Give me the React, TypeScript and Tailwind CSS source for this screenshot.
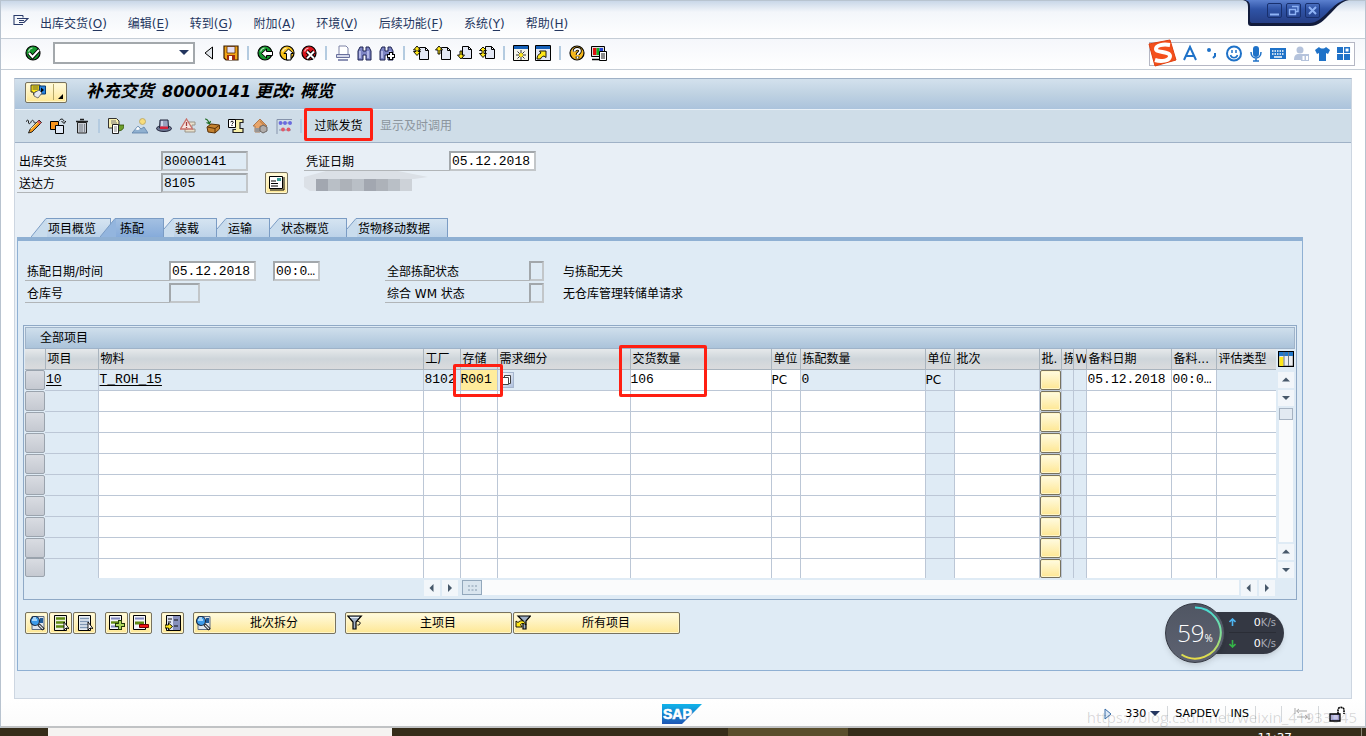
import type { ReactNode } from "react";
import clsx from "clsx";

const MENUS = [
  ["出库交货", "O"],
  ["编辑", "E"],
  ["转到", "G"],
  ["附加", "A"],
  ["环境", "V"],
  ["后续功能", "F"],
  ["系统", "Y"],
  ["帮助", "H"],
];

const ball = (c: string) => (
  <>
    <circle cx="8" cy="8" r="7" fill={c} stroke="#000" strokeWidth="1.2" />
    <path d="M3.500 6.500a5 5 0 0 1 4-3.500" stroke="#fff" strokeWidth="1.200" fill="none" opacity=".7" />
  </>
);
const sheet = (
  <path d="M6.500 2.500h6l3 3v9h-9z M12.500 2.500v3h3" fill="#e3e8f5" stroke="#000" />
);
const binoculars = (
  <>
    <path d="M1 15V6l2-4h3v4h3V2h3l2 4v9h-5v-5H6v5z" fill="#7d84c4" stroke="#1c2350" />
    <path d="M3 6v7M11 6v7" stroke="#c9cdf2" strokeWidth="1.400" />
  </>
);
const magnifier = (
  <>
    <path d="M3 1.500h12v13H3z" fill="#dfe5ec" stroke="#5c6b80" />
    <path d="M11 3h3v5h-3z" fill="#1f5b9a" />
    <circle cx="6" cy="6" r="4.500" fill="#3c9bea" stroke="#1b2c45" strokeWidth="1.200" />
    <path d="M3 5h5M4 3h3" stroke="#c9e9ff" strokeWidth="1.300" />
    <path d="M9.500 9.500l5 5" stroke="#000" strokeWidth="3" />
    <path d="M10 10l4 4" stroke="#d8e0ea" strokeWidth="1.400" />
  </>
);
const pointer = <path d="M11 7v8l2-2 3 .5z" fill="#fff" stroke="#000" strokeWidth=".9" />;

const ICONS: Record<string, ReactNode> = {
  exit: (
    <path d="M10 2.500H1v9h9M10 2.500v2M4 5.500h7.500l3.500 0-4 4H6M6 7.500h5" fill="none" stroke="#2b3c6b" strokeWidth="1.100" />
  ),
  check: (
    <>
      {ball("#159a2e")}
      <path d="M4 8l3.500 4L14 5" fill="none" stroke="#000" strokeWidth="4" />
      <path d="M4 8l3.500 4L14 5" fill="none" stroke="#fff" strokeWidth="2" />
    </>
  ),
  first: <path d="M11.500 2v12L4 8z" fill="#e3e7ec" stroke="#000" />,
  save: (
    <>
      <path d="M1 1h14v14H3l-2-2z" fill="#f2a618" stroke="#3a1c00" strokeWidth="1.200" />
      <path d="M4 1.500h8V8H4z" fill="#e6dff2" stroke="#5b2b00" strokeWidth=".8" />
      <path d="M4 10h8v5H4z" fill="#a02a10" />
      <path d="M6 11h3v4H6z" fill="#fff" />
    </>
  ),
  back: (
    <>
      {ball("#159a2e")}
      <path d="M4.500 8.500l5-4.500V6.500h6v4h-6V13z" fill="#fff" stroke="#000" />
    </>
  ),
  up: (
    <>
      {ball("#f7c21b")}
      <path d="M9.500 4L5 8.500h2.500V15h4.500V8.500h2.500z" fill="#fff" stroke="#000" />
    </>
  ),
  cancel: (
    <>
      {ball("#d9141c")}
      <path d="M6 6.500l7 7M13 6.500l-7 7" stroke="#000" strokeWidth="4" />
      <path d="M6 6.500l7 7M13 6.500l-7 7" stroke="#fff" strokeWidth="2" />
    </>
  ),
  print: (
    <>
      <path d="M4 9V1h7l2 2v6" fill="#fff" stroke="#7c82a6" />
      <path d="M1.500 9.500h13v3h-13z" fill="#d5d8ea" stroke="#686f9c" />
      <path d="M3 15h10" stroke="#686f9c" strokeWidth="1.500" />
    </>
  ),
  find: binoculars,
  findNext: (
    <>
      {binoculars}
      <path d="M12 7v8M8 11h8" stroke="#000" strokeWidth="4" />
      <path d="M12 8v6M9 11h6" stroke="#fff" strokeWidth="2" />
    </>
  ),
  firstPage: (
    <>
      {sheet}
      <path d="M4 1L.500 5H3v1.500H.500L4 10.500l3.500-4H5V5h2.500z" fill="#ffe81a" stroke="#000" strokeWidth=".9" />
    </>
  ),
  prevPage: (
    <>
      {sheet}
      <path d="M4 1L.500 5H3v4h2V5h2.500z" fill="#ffe81a" stroke="#000" strokeWidth=".9" />
    </>
  ),
  nextPage: (
    <>
      <g transform="translate(-1 -1)">{sheet}</g>
      <path d="M4 14L.500 10H3V6h2v4h2.500z" fill="#ffe81a" stroke="#000" strokeWidth=".9" />
    </>
  ),
  lastPage: (
    <>
      <g transform="translate(0 -1)">{sheet}</g>
      <path d="M4 2l3.500 3.500H5v3h2.500L4 12.500.500 8.500H3v-3H.500z" fill="#ffe81a" stroke="#000" strokeWidth=".9" />
    </>
  ),
  session: (
    <>
      <path d="M.5.5h15v15H.5z" fill="#f4f4ea" stroke="#000" />
      <path d="M1 1h14v3H1z" fill="#1560b8" />
      <path d="M8 5v10M3 10h10M4.500 6.500l7 7M11.500 6.500l-7 7" stroke="#333" />
      <circle cx="8" cy="10" r="2" fill="#ffe81a" />
    </>
  ),
  shortcut: (
    <>
      <path d="M.5.5h15v15H.5z" fill="#e3e8f5" stroke="#000" />
      <path d="M1 1h14v3H1z" fill="#1560b8" />
      <path d="M2 14c0-3 1.500-5 4-6L4.500 6H11v6.500L9 11c-2 .500-3 1.500-3.500 3z" fill="#ffe81a" stroke="#000" strokeWidth=".9" />
    </>
  ),
  help: (
    <>
      {ball("#f5b81c")}
      <path d="M5.500 6.500C5.500 3 11 3 11 6c0 2-2.500 2-2.500 4M8.500 11.500v2" stroke="#000" strokeWidth="3.600" fill="none" />
      <path d="M5.500 6.500C5.500 3 11 3 11 6c0 2-2.500 2-2.500 4M8.500 11.500v2" stroke="#fff" strokeWidth="1.800" fill="none" />
    </>
  ),
  monitor: (
    <>
      <path d="M.5 1.500h13v10H.5z" fill="#ddd" stroke="#000" />
      <path d="M2 3h3.500v7H2z" fill="#e01010" />
      <path d="M5.500 3h3v7h-3z" fill="#10b020" />
      <path d="M8.500 3H12v7H8.500z" fill="#2040d0" />
      <path d="M1 14.500h8" stroke="#000" strokeWidth="1.500" />
      <path d="M8.500 6.500h7v9h-7z" fill="#fff" stroke="#000" />
      <path d="M10 9h4M10 11h4M10 13h4" stroke="#000" strokeWidth=".9" />
    </>
  ),
  command: (
    <>
      <path d="M1 1h9v7H5l-1 3-1-3H1z" fill="#ffe81a" stroke="#222" strokeWidth=".9" />
      <path d="M2.500 3h6M2.500 5h6" stroke="#333" strokeWidth=".8" />
      <path d="M9.500 2h6v8h-6z" fill="#2b86e0" stroke="#0b3a70" />
      <path d="M11 3.500v5L14 6z" fill="#000" />
      <path d="M4 9l5-3 3 3-4 5-4-2z" fill="#e6e9f2" stroke="#555" strokeWidth=".8" />
    </>
  ),
  edit: (
    <>
      <path d="M0 4c1-3 3-2 2.500 0s1.500 2.500 2.500 0S7.500 2 8 4s2 1 2.500 0" fill="none" stroke="#222" />
      <path d="M13 2l2.500 2.500L6 14l-3.500 1L4 11.500z" fill="#f59b1c" stroke="#222" />
      <path d="M12 3l2.500 2.500" stroke="#d9546a" strokeWidth="2" />
      <path d="M5 11l6.500-6.500" stroke="#ffe28a" />
    </>
  ),
  other: (
    <>
      <path d="M.5 3.500h8v8h-8z" fill="#f7941d" stroke="#000" />
      <path d="M5.500 7.500h8v8h-8z" fill="#dfe8f5" stroke="#000" />
      <path d="M9.500 2.500c1-2 4-2 4.500 1M11.500 3l2.500 2.500L16 3" fill="none" stroke="#000" />
    </>
  ),
  trash: (
    <>
      <path d="M3.500 4.500h9V15h-9z" fill="#c8ccd2" stroke="#222" />
      <path d="M2 3.500h12M6 1.500h4" stroke="#222" strokeWidth="1.600" />
      <path d="M6 6v8M8 6v8M10.500 6v8" stroke="#7b828d" />
    </>
  ),
  doc: (
    <>
      <path d="M.5.5h8l2.500 2.500v7H.5z" fill="#f7efb0" stroke="#333" />
      <path d="M3 3h5M3 5h6" stroke="#777" />
      <path d="M9 7h7c0 4-2 6-7 6z" fill="#6c9e2a" stroke="#2e4d08" strokeWidth=".8" />
      <path d="M4.500 6.500h6v9h-6z" fill="#fff" stroke="#222" />
      <path d="M6 9h3M6 11h3M6 13h3" stroke="#888" />
    </>
  ),
  scenery: (
    <>
      <circle cx="10.500" cy="3.500" r="3" fill="#f7dc7a" stroke="#b8a260" strokeWidth=".8" />
      <path d="M0 15l6-7 3 3 3-2 4 6z" fill="#8fb0d0" stroke="#5e82a8" strokeWidth=".8" />
      <path d="M3.500 11.500L6 8.500l2 2.500-2 1z" fill="#fff" />
    </>
  ),
  hat: (
    <>
      <ellipse cx="8" cy="10.500" rx="7.500" ry="3" fill="#6b7390" stroke="#20243a" />
      <path d="M4 2h8l.5 8h-9z" fill="#9aa2c0" stroke="#20243a" />
      <path d="M6 3v5" stroke="#e2e6f4" strokeWidth="1.500" />
      <path d="M4 8.500h8v2.500H4z" fill="#d6213a" />
    </>
  ),
  warn: (
    <>
      <path d="M8 4h7v3h-3v4h3v3H5v-3h3z" fill="#e8e0cc" stroke="#9a9488" />
      <path d="M6.500 1l6 10h-12z" fill="#f6e6e2" stroke="#c9706a" strokeWidth="1.300" />
      <path d="M6.500 4v4M6.500 9v1" stroke="#a03a3a" strokeWidth="1.300" />
    </>
  ),
  pack: (
    <>
      <path d="M3 9l4-3 8.500 1v4L11 15l-7-1z" fill="#c4812e" stroke="#5a3208" />
      <path d="M3.500 9l7.500 1.500L15 7.500M11 10.500V15" stroke="#5a3208" fill="none" />
      <path d="M1 1c2 0 3 1 4 4M2.500 4.500L5.500 6 6.500 3" stroke="#1d6b22" strokeWidth="1.200" fill="none" />
    </>
  ),
  script: (
    <>
      <path d="M6 1.500h9v3h-3v6h3v4H5v-3h3" fill="#f6efa8" stroke="#222" strokeWidth="1.200" />
      <path d="M.5 1.500h7v8h-7z" fill="#fff" stroke="#000" />
      <path d="M2.800 4.300c0-1.500 2.500-1.500 2.500 0 0 1-1.300 1-1.300 2M4 7v1" stroke="#000" fill="none" />
    </>
  ),
  house: (
    <>
      <path d="M8 1L1 8h2v6h5V8h7z" fill="#e8a56a" stroke="#b07a4e" />
      <path d="M8 3l6 6" stroke="#c98648" strokeWidth="1.500" />
      <path d="M3 10h5v4H3z" fill="#9a9694" />
      <path d="M8 9l3-2 4 2v4l-4 2-3-2z" fill="#b0acaa" stroke="#6b6664" />
    </>
  ),
  beads: (
    <>
      <path d="M1 16V1.500h15M3 5h13M3 12h12" fill="none" stroke="#8593ab" />
      <g fill="#6a6ae0">
        <circle cx="4.500" cy="5" r="1.900" />
        <circle cx="9" cy="5" r="1.900" />
        <circle cx="14" cy="5" r="1.900" />
      </g>
      <g fill="#e05a6a">
        <circle cx="7" cy="11.500" r="1.900" />
        <circle cx="12.500" cy="11.500" r="1.900" />
      </g>
    </>
  ),
  address: (
    <>
      <path d="M.5 1.500h13v12H.5z" fill="#fff" stroke="#000" />
      <path d="M15 2v13H1" stroke="#000" fill="none" />
      <path d="M8 3h4v3H8z" fill="#3a9a94" />
      <path d="M2 6h5M2 8.500h7M2 11h7" stroke="#000" />
    </>
  ),
  detail: magnifier,
  selectAll: (
    <>
      <path d="M1.500.5h12v15h-12z" fill="#eef0e2" stroke="#000" />
      <path d="M3 3.500h9M3 7.500h9M3 11.500h9" stroke="#5f8a12" strokeWidth="2.600" />
      {pointer}
    </>
  ),
  deselect: (
    <>
      <path d="M1.500.5h12v15h-12z" fill="#e9eff5" stroke="#000" />
      <path d="M3 3.500h9M3 6.500h9M3 9.500h9M3 12.500h9" stroke="#8098b4" strokeWidth="1.500" />
      {pointer}
    </>
  ),
  addRow: (
    <>
      <path d="M.5.5h12v14H.5z" fill="#f3f5fa" stroke="#000" />
      <path d="M2 3.500h9M2 11.500h9" stroke="#8088bc" strokeWidth="2" />
      <path d="M2 7.500h9" stroke="#5f8a12" strokeWidth="2.400" />
      <path d="M11 5v10M6 10h10" stroke="#1e3408" strokeWidth="4" />
      <path d="M11 6v8M7 10h8" stroke="#a9d45a" strokeWidth="2.200" />
    </>
  ),
  removeRow: (
    <>
      <path d="M.5.5h12v14H.5z" fill="#f3f5fa" stroke="#000" />
      <path d="M2 3.500h9" stroke="#8088bc" strokeWidth="2" />
      <path d="M2 8h9" stroke="#5f8a12" strokeWidth="3" />
      <path d="M6.500 9.500h9v3h-9z" fill="#f01414" stroke="#700" />
    </>
  ),
  position: (
    <>
      <path d="M1.500.5h14v15h-14z" fill="#dfe3f2" stroke="#000" />
      <path d="M8 1h7v14H8z" fill="#8790bd" />
      <path d="M3 4h4M9 5h4M3 7h3M9 11h4" stroke="#111" />
      <path d="M0 10h3.500V8L7.500 11.500l-4 3.500v-2H0z" fill="#ffe81a" stroke="#000" strokeWidth=".9" />
    </>
  ),
  filter: (
    <>
      <path d="M.8 1h13.500L9 7v7H6V7z" fill="#9fb0c6" stroke="#000" strokeWidth="1.200" />
      <path d="M3 2.500h9" stroke="#e6edf5" />
      <path d="M10.500 6.500c3.500-.500 3.500 4 0 3.500" stroke="#000" fill="none" />
    </>
  ),
  unfilter: (
    <>
      <path d="M3 1h12.500L11 6v8H8V6z" fill="#9fb0c6" stroke="#000" strokeWidth="1.200" />
      <path d="M1 12V6l2 1.500c3-3 7-2 8 2.500-2-2-4-2-5.500-.500L7 12z" fill="#ffe81a" stroke="#000" strokeWidth=".9" />
    </>
  ),
  columns: (
    <>
      <path d="M.5.5h15v15H.5z" fill="#eceef0" stroke="#000" strokeWidth="1.400" />
      <path d="M1 1h14v4H1z" fill="#2378c8" />
      <path d="M1.500 6h4v9h-4z" fill="#ffe81a" />
      <path d="M6 1v14M10.500 1v14" stroke="#6d7884" />
    </>
  ),
  swap: <path d="M1 2v6M3 5h10M5 3L2.500 5 5 7M15 8v6M3 11h10M11 9l2.500 2-2.500 2" fill="none" stroke="#a9a9a9" />,
  lock: (
    <>
      <path d="M9 8V4c0-3.500 6-3.500 6 0v4" fill="none" stroke="#000" strokeWidth="1.600" strokeDasharray="2 .6" />
      <path d="M1 8h10v7H1z" fill="#a7a6d8" stroke="#000" strokeWidth="1.300" />
      <path d="M3 10h6M3 12h6" stroke="#e5e5fa" />
    </>
  ),
};

function Icon({ name }: { name: string }) {
  return (
    <svg width="16" height="16" viewBox="0 0 16 16" className="shrink-0" aria-hidden="true">
      {ICONS[name]}
    </svg>
  );
}

function IconButton({ name }: { name: string }) {
  return (
    <button aria-label={name} className="size-4 shrink-0">
      <Icon name={name} />
    </button>
  );
}

const Sep = () => <span className="h-3.5 w-0.5 shrink-0 bg-[#b4cbe0]" />;

const YELLOW = "rounded-xs border border-[#77725f] bg-linear-to-b from-[#fffbe0] to-[#fee793] shadow-[inset_0_0_0_1px_#fff6c8]";
const MONO = "font-['Liberation_Mono','Noto_Sans_CJK_SC',monospace] text-[13px]";
const FIELD = "h-5 border-2 border-[#a2a7ab] border-r-[#c2c6c9] border-b-[#c2c6c9] px-px";

type FieldProps = { id: string; label: string; value?: string; labelW: string; inputW: string; readOnly?: boolean };

function Field({ id, label, value = "", labelW, inputW, readOnly }: FieldProps) {
  return (
    <div className="flex h-5">
      <label htmlFor={id} className={clsx("border-b border-[#b1b5b8] pl-0.5 leading-[23px] whitespace-nowrap", labelW)}>
        {label}
      </label>
      <input id={id} defaultValue={value} readOnly={readOnly} className={clsx(FIELD, MONO, inputW, readOnly ? "bg-[#dfebf5]" : "bg-white")} />
    </div>
  );
}

const TABS = [
  { label: "项目概览", w: "w-20" },
  { label: "拣配", w: "-ml-[11px] w-16", active: true },
  { label: "装载", w: "w-[53px]" },
  { label: "运输", w: "w-[53px]" },
  { label: "状态概览", w: "w-[77px]" },
  { label: "货物移动数据", w: "w-[101px]" },
];

function Tab({ label, w, active, first }: { label: string; w: string; active?: boolean; first: boolean }) {
  const wide = active || first;
  return (
    <button role="tab" aria-selected={!!active} className={clsx("flex h-[19px]", w, active && "relative z-10")}>
      {wide ? (
        <svg width="16" height="19" viewBox="0 0 16 19" className="shrink-0" aria-hidden="true">
          <path d="M0 19L15 .5H16V19z" fill={active ? "#93b5de" : "#c9dced"} />
          <path d="M0 19L15 .5H16" fill="none" stroke="#7b9cc4" />
        </svg>
      ) : (
        <svg width="10" height="19" viewBox="0 0 10 19" className="shrink-0" aria-hidden="true">
          <path d="M0 11L9 .5H10V19H0z" fill="#c9dced" />
          <path d="M0 11L9 .5H10" fill="none" stroke="#7b9cc4" />
        </svg>
      )}
      <span
        className={clsx(
          "h-full flex-1 border-t border-r border-[#7b9cc4] text-left leading-[21px] whitespace-nowrap",
          active ? "bg-linear-to-b from-[#a3c0e2] to-[#86abda] pl-1" : "bg-linear-to-b from-[#d5e4f1] to-[#bcd2e8] pl-px"
        )}
      >
        {label}
      </span>
    </button>
  );
}

// the material column has no width and takes what is left
const COLS = [
  { key: "item", head: "项目", w: "w-[53px]", blue: true },
  { key: "material", head: "物料", w: "" },
  { key: "plant", head: "工厂", w: "w-[37px]" },
  { key: "sloc", head: "存储", w: "w-[37px]" },
  { key: "req", head: "需求细分", w: "w-[133px]" },
  { key: "qty", head: "交货数量", w: "w-[141px]" },
  { key: "unit", head: "单位", w: "w-[29px]" },
  { key: "picked", head: "拣配数量", w: "w-[125px]" },
  { key: "unit2", head: "单位", w: "w-[29px]", blue: true },
  { key: "batch", head: "批次", w: "w-[85px]" },
  { key: "split", head: "批.", w: "w-[22px]", blue: true },
  { key: "pick", head: "拣", w: "w-[12px]", blue: true },
  { key: "wm", head: "W", w: "w-[13px]", blue: true },
  { key: "date", head: "备料日期", w: "w-[85px]" },
  { key: "time", head: "备料...", w: "w-[45px]" },
  { key: "valuation", head: "评估类型", w: "w-[60px]" },
];

const FIRST_WHITE = ["qty", "unit", "date", "time"];

function FirstRowCell({ id }: { id: string }) {
  switch (id) {
    case "item":
      return <a href="#item" className={clsx(MONO, "block h-5 pl-px leading-5 underline underline-offset-2")}>10</a>;
    case "material":
      return <a href="#material" className={clsx(MONO, "block h-5 pl-px leading-5 underline underline-offset-2")}>T_ROH_15</a>;
    case "plant":
      return <div className={clsx(MONO, "h-5 pl-px leading-5")}>8102</div>;
    case "sloc":
      return (
        <>
          <input aria-label="存储" defaultValue="R001" className={clsx(MONO, "block h-5 w-full bg-[#ffec9b]")} />
          <span className="pointer-events-none absolute -top-1.5 -left-2 z-20 h-[33px] w-[50px] rounded-xs border-3 border-[#ff1f12]" />
        </>
      );
    case "req":
      return (
        <button aria-label="搜索帮助" className="ml-0.5 block h-4 w-3.5 border border-[#a6b6ce] bg-linear-to-br from-white to-[#aebfdd]">
          <svg width="12" height="14" viewBox="0 0 12 14" aria-hidden="true">
            <path d="M3.500 4.500V2.500h6v8h-2M1.500 4.500h6v7h-6z" fill="#fff" stroke="#444" />
          </svg>
        </button>
      );
    case "qty":
      return <input aria-label="交货数量" defaultValue="106" className={clsx(MONO, "block h-5 w-full bg-white")} />;
    case "unit":
    case "unit2":
      return <div className="h-5 leading-[21px]">PC</div>;
    case "picked":
      return <div className={clsx(MONO, "h-5 pl-px leading-5")}>0</div>;
    case "date":
      return <input aria-label="备料日期" defaultValue="05.12.2018" className={clsx(MONO, "block h-5 w-full bg-white pl-px")} />;
    case "time":
      return <input aria-label="备料时间" defaultValue="00:0…" className={clsx(MONO, "block h-5 w-full bg-white pl-px")} />;
    default:
      return null;
  }
}

function ItemsTable() {
  return (
    <table className="w-full table-fixed border-collapse bg-[#dfebf5]">
      <colgroup>
        <col className="w-5" />
        {COLS.map((c) => (
          <col key={c.key} className={c.w} />
        ))}
      </colgroup>
      <thead>
        <tr className="h-5 bg-linear-to-b from-[#e6e9eb] via-[#ced5da] to-[#dadbdd]">
          <th aria-label="选择" className="border-r border-b border-[#a9b4be]" />
          {COLS.map((c) => (
            <th key={c.key} className={clsx("relative border-r border-b border-[#a9b4be] p-0 text-left font-normal", c.key === "valuation" && "border-r-0")}>
              <div className="h-[19px] overflow-hidden pl-0.5 leading-5 whitespace-nowrap">{c.head}</div>
              {c.key === "qty" && (
                <span className="pointer-events-none absolute -top-1 -left-3 z-20 h-13 w-[88px] rounded-xs border-3 border-[#ff1f12]" />
              )}
            </th>
          ))}
        </tr>
      </thead>
      <tbody>
        {Array.from({ length: 10 }, (_, row) => (
          <tr key={row} className={row === 9 ? "h-[19px]" : "h-[21px]"}>
            <td className="p-0">
              <button
                aria-label={`行 ${row + 1}`}
                className={clsx("block w-full rounded-xs border border-[#9aa3ad] bg-linear-to-b from-[#d9dce2] to-[#c5c9d1]", row === 9 ? "h-[19px]" : "h-5")}
              />
            </td>
            {COLS.map((c) => (
              <td
                key={c.key}
                className={clsx(
                  "relative border-r border-[#bcc7d6] p-0 whitespace-nowrap",
                  row < 9 && "border-b",
                  c.key === "valuation" && "border-r-0",
                  (row === 0 ? FIRST_WHITE.includes(c.key) : !c.blue) && "bg-white"
                )}
              >
                {c.key === "split" ? (
                  <button aria-label="批次拆分" className={clsx("block w-full", YELLOW, row === 9 ? "h-[19px]" : "h-5")} />
                ) : (
                  row === 0 && <FirstRowCell id={c.key} />
                )}
              </td>
            ))}
          </tr>
        ))}
      </tbody>
    </table>
  );
}

const ARROWS = {
  up: "M4 9.500L8 5.500l4 4z",
  down: "M4 6L8 10l4-4z",
  left: "M9.500 4v8L5.500 8z",
  right: "M6 4v8l4-4z",
};

function Arrow({ dir }: { dir: keyof typeof ARROWS }) {
  return (
    <button aria-label={dir} className="size-4 shrink-0 bg-[#f2f6fa]">
      <svg width="16" height="16" viewBox="0 0 16 16" aria-hidden="true">
        <path d={ARROWS[dir]} fill="#47586a" />
      </svg>
    </button>
  );
}

function SmallButton({ name }: { name: string }) {
  return (
    <button aria-label={name} className={clsx("flex h-[22px] w-[23px] items-center justify-center", YELLOW)}>
      <Icon name={name} />
    </button>
  );
}

function WideButton({ name, label, w }: { name: string; label: string; w: string }) {
  return (
    <button className={clsx("flex h-[22px] items-center pl-px", w, YELLOW)}>
      <Icon name={name} />
      <span className="flex-1 pl-0.5 text-center leading-[22px]">{label}</span>
    </button>
  );
}

function NetMonitor() {
  return (
    <div className="absolute right-[18px] bottom-[7px] z-20 flex items-center text-white">
      <div className="relative z-10 flex size-15 items-center justify-center rounded-full border border-[#343842] bg-linear-to-b from-[#505663] to-[#5d6271] shadow-md">
        <svg width="58" height="58" viewBox="0 0 58 58" className="absolute inset-0" aria-hidden="true">
          <defs>
            <linearGradient id="arc" x1="0" y1="0" x2="0" y2="1">
              <stop offset="0" stopColor="#45dcd8" />
              <stop offset=".6" stopColor="#8ce08a" />
              <stop offset="1" stopColor="#e8dc48" />
            </linearGradient>
          </defs>
          <path d="M29 3.500A25.500 25.500 0 1 1 15.500 50.500" fill="none" stroke="url(#arc)" strokeWidth="2" />
        </svg>
        <span className="font-['Open_Sans',sans-serif] text-2xl font-light">59</span>
        <span className="mt-3 font-['Open_Sans',sans-serif] text-[10px]">%</span>
      </div>
      <div className="-ml-3 h-[42px] w-[71px] rounded-r-full bg-[#343843] pr-2 pl-4 shadow-md">
        {["up", "down"].map((d) => (
          <div key={d} className={clsx("flex h-[21px] items-center justify-between", d === "up" && "border-b border-[#2a2d36]")}>
            <svg width="7" height="8" viewBox="0 0 7 8" aria-hidden="true">
              <path d={d === "up" ? "M3.500 8V1M.5 4l3-3 3 3" : "M3.500 0v7M.5 4l3 3 3-3"} fill="none" stroke={d === "up" ? "#4db4f0" : "#35b548"} strokeWidth="1.600" />
            </svg>
            <span className="pt-0.5 text-[11px]">
              0<span className="text-[10px] text-[#a5a9b3]">K/s</span>
            </span>
          </div>
        ))}
      </div>
    </div>
  );
}

function WindowButtons() {
  return (
    <div className="absolute -top-px right-4 h-[27px] w-[106px]">
      <svg width="106" height="27" viewBox="0 0 106 27" className="absolute inset-0" aria-hidden="true">
        <defs>
          <linearGradient id="notch" x1="0" y1="0" x2="0" y2="1">
            <stop offset="0" stopColor="#5b80cf" />
            <stop offset=".4" stopColor="#2f53a6" />
            <stop offset="1" stopColor="#263f86" />
          </linearGradient>
        </defs>
        <path d="M0 0c4 1 5 3 5 7v16q0 3 3 3h59c9 0 14-6 21-13S97 2 106 0z" fill="#111b3c" />
        <path d="M2 0c4 1 5 3 5 7v14q0 2 3 2h56c8 0 13-5 19-11S95 2 102 0z" fill="url(#notch)" />
      </svg>
      <div className="relative flex gap-1 pt-[3px] pl-6">
        {["M3 11.500h9", "M6 3.500h6v5h-2M3.500 6.500h6v5h-6z", "M4 4l7 7M11 4l-7 7"].map((d, i) => (
          <button key={d} aria-label={["最小化", "还原", "关闭"][i]} className="size-[15px] rounded-xs border border-[#18306e]">
            <svg width="13" height="13" viewBox="1 1 13 13" aria-hidden="true">
              <path d={d} fill="none" stroke="#8fb3f5" strokeWidth={i === 1 ? 1.4 : 2} />
            </svg>
          </button>
        ))}
      </div>
    </div>
  );
}

function ImeBar() {
  return (
    <div className="absolute top-[3px] right-2.5 flex h-6 w-[206px] items-center border border-[#b5b7c4] bg-white pl-7">
      <svg width="30" height="28" viewBox="0 0 30 28" className="absolute -top-1 -left-0.5" aria-hidden="true">
        <path d="M1 5L22 1l6 20L7 27z" fill="#f4501c" stroke="#e04010" />
        <path d="M22 6C15 5 8 6 8 10s14 2 14 7-9 6-15 4" fill="none" stroke="#fff" strokeWidth="4" />
      </svg>
      <svg width="176" height="20" viewBox="0 0 176 20" fill="none" stroke="#1f72c8" strokeWidth="2" aria-hidden="true">
        <path d="M6 16l6-13 6 13M8 12h8" />
        <circle cx="31" cy="6" r="1" />
        <path d="M37 9v3l-2 2" />
        <circle cx="56" cy="9.500" r="7" />
        <path d="M54 6v3M58 6v3M52.500 11c1 3.500 6 3.500 7 0" strokeWidth="1.500" />
        <path d="M78 5v5" strokeWidth="6" strokeLinecap="round" />
        <path d="M73 8c0 8 10 8 10 0M78 14v3M75 17h6" strokeWidth="1.500" />
        <path d="M92 4h16v11H92z" fill="#1f72c8" stroke="none" />
        <path d="M94 7h12M94 10h12" stroke="#fff" strokeWidth="1.500" strokeDasharray="1.500 1" />
        <path d="M96 13h8" stroke="#fff" strokeWidth="1.500" />
        <g fill="#b5c3dc" stroke="none">
          <circle cx="122" cy="6" r="3.500" />
          <path d="M116 16c0-6 3-6 6-6s5 1 5 6z" />
          <path d="M123 10h8v7h-8z" />
          <path d="M124.500 12h2v4h-2zM128 12h2v4h-2z" fill="#fff" />
        </g>
        <path d="M141 3c2 2 5 2 7 0l4 3-2 4-2-1v8h-7V9l-2 1-2-4z" fill="#1f72c8" stroke="none" />
        <path d="M159 3h6v6h-6zM159 10h6v6h-6zM166 10h6v6h-6z" fill="#1f72c8" stroke="none" />
        <path d="M166.800 3.800h4.500v4.500h-4.500z" strokeWidth="1.500" />
      </svg>
    </div>
  );
}

export default function App() {
  return (
    <div className="flex min-h-screen flex-col overflow-hidden bg-white font-['DejaVu_Sans','Noto_Sans_CJK_SC',sans-serif] text-xs text-black">
      <div className="relative flex flex-1 flex-col border-x border-[#b8c3cf] bg-white">
        <nav className="relative flex h-[39px] items-center border-y border-y-[#b8c4d0] border-b-[#c5cdd6] bg-linear-to-b from-[#c9d7e8] via-[#f3f6fa] via-30% to-white pt-2 pl-3 text-[#24365f]">
          <span className="flex pb-1.5"><IconButton name="exit" /></span>
          <div className="flex gap-[21px] pl-[11px]">
            {MENUS.map(([text, key]) => (
              <button key={key} className="whitespace-nowrap">
                {text}(<u className="underline-offset-2">{key}</u>)
              </button>
            ))}
          </div>
          <WindowButtons />
        </nav>

        <div className="relative flex h-[31px] items-center gap-1.5 border-b border-[#c5cdd6] bg-linear-to-b from-[#f5f7fb] to-white pb-0.5 pl-6">
          <IconButton name="check" />
          <div className="relative ml-1.5">
            <input aria-label="命令" className="block h-[22px] w-[142px] border-2 border-[#a3a8ac] bg-white" />
            <svg width="10" height="6" viewBox="0 0 10 6" className="absolute top-2 right-1.5" aria-hidden="true">
              <path d="M0 0h10L5 5z" fill="#24365f" />
            </svg>
          </div>
          <IconButton name="first" />
          <IconButton name="save" />
          <span className="flex px-0.5"><Sep /></span>
          {["back", "up", "cancel"].map((n) => <IconButton key={n} name={n} />)}
          <span className="flex px-0.5"><Sep /></span>
          {["print", "find", "findNext"].map((n) => <IconButton key={n} name={n} />)}
          <span className="flex px-0.5"><Sep /></span>
          {["firstPage", "prevPage", "nextPage", "lastPage"].map((n) => <IconButton key={n} name={n} />)}
          <span className="flex px-0.5"><Sep /></span>
          {["session", "shortcut"].map((n) => <IconButton key={n} name={n} />)}
          <span className="flex px-0.5"><Sep /></span>
          {["help", "monitor"].map((n) => <IconButton key={n} name={n} />)}
          <ImeBar />
        </div>

        <main className="mx-[13px] mt-2 flex flex-1 flex-col border border-[#cdd6e1] border-t-[#9fb1c6] bg-[#e8eff6]">
          <header className="flex h-[31px] items-center border-b border-[#e8f0f7] bg-linear-to-b from-[#d3e1ed] via-[#bfd2e2] to-[#abc3dc] pb-1 pl-2.5">
            <button aria-label="服务" className={clsx("flex h-[21px] w-[42px] items-center pl-1", YELLOW)}>
              <Icon name="command" />
              <svg width="16" height="16" viewBox="0 0 16 16" className="ml-1" aria-hidden="true">
                <path d="M3.500 0v16" stroke="#b5a86a" />
                <path d="M13 10v5H8z" fill="#000" />
              </svg>
            </button>
            <h1 className="ml-[19px] flex items-baseline gap-1 text-[17px] font-bold italic">
              <span className="mr-1">补充交货</span>
              <span className="text-base">80000141</span>
              <span>更改:</span>
              <span>概览</span>
            </h1>
          </header>

          <div className="flex h-[33px] items-center gap-2 border-b border-[#9fb1c6] bg-[#cfdde8] pl-[11px]">
            {["edit", "other", "trash"].map((n) => <IconButton key={n} name={n} />)}
            <Sep />
            {["doc", "scenery", "hat", "warn", "pack", "script", "house", "beads"].map((n) => <IconButton key={n} name={n} />)}
            <div className="flex items-center">
              <Sep />
              <button className="mb-1 ml-0.5 h-[33px] w-[69px] rounded-xs border-3 border-[#ff1f12] pt-1">过账发货</button>
              <button disabled className="pl-[7px] text-[#8c959d]">显示及时调用</button>
            </div>
          </div>

          <div className="flex pt-2 pl-0.5">
            <div className="flex flex-col gap-0.5">
              <Field id="delivery" label="出库交货" value="80000141" labelW="w-36" inputW="w-[87px]" readOnly />
              <Field id="shipTo" label="送达方" value="8105" labelW="w-36" inputW="w-[87px]" readOnly />
            </div>
            <button aria-label="地址" className={clsx("mt-[21px] ml-[17px] flex h-[22px] w-[23px] items-center justify-center", YELLOW)}>
              <Icon name="address" />
            </button>
            <div className="ml-4">
              <Field id="docDate" label="凭证日期" value="05.12.2018" labelW="w-[145px]" inputW="w-[87px]" />
              <svg width="126" height="24" viewBox="0 0 126 24" className="-mt-0.5" aria-hidden="true">
                <path d="M0 8L22 2h72l30 6-14 2H96v12H6L0 18z" fill="#dbe0e6" />
                <path d="M12 10h12v12H12zM60 10h12v12H60z" fill="#a2a7b0" />
                <path d="M24 10h12v12H24zM48 10h12v12H48zM84 10h12v12H84z" fill="#b9bfc6" />
                <path d="M36 10h12v12H36zM72 10h12v12H72z" fill="#adb2b9" />
                <path d="M96 10h12v12H96z" fill="#cdd2d8" />
              </svg>
            </div>
          </div>

          <section className="mt-6 mr-12 mb-[27px] ml-0.5 flex flex-1 flex-col">
            <div role="tablist" className="flex pl-3.5">
              {TABS.map((t, i) => (
                <Tab key={t.label} {...t} first={i === 0} />
              ))}
            </div>
            <div className="relative flex-1 border border-t-4 border-[#8fb0d3] bg-[#dfebf5] px-1.5 pt-5">
              <div className="flex pl-px">
                <div className="flex flex-col gap-0.5">
                  <Field id="pickDate" label="拣配日期/时间" value="05.12.2018" labelW="w-36" inputW="w-[87px]" />
                  <Field id="warehouse" label="仓库号" labelW="w-36" inputW="w-[31px]" readOnly />
                </div>
                <input aria-label="拣配时间" defaultValue="00:0…" className={clsx("ml-[17px] w-[47px] bg-white", FIELD, MONO)} />
                <div className="ml-[65px] flex flex-col gap-0.5">
                  <Field id="pickStatus" label="全部拣配状态" labelW="w-36" inputW="w-[15px]" readOnly />
                  <Field id="wmStatus" label="综合 WM 状态" labelW="w-36" inputW="w-[15px]" readOnly />
                </div>
                <div className="ml-[19px] leading-[22px]">
                  <p>与拣配无关</p>
                  <p>无仓库管理转储单请求</p>
                </div>
              </div>

              <div className="mt-5 -mr-px -ml-px border border-[#8fa9c6] p-px">
                <h2 className="flex h-[22px] items-center border border-[#9fb3c9] bg-linear-to-b from-[#cfdfec] to-[#abc3da] pl-3.5">全部项目</h2>
                <div className="flex">
                  <div className="min-w-0 flex-1">
                    <ItemsTable />
                  </div>
                  <div className="flex w-[19px] flex-col items-center gap-0.5 pt-0.5">
                    <IconButton name="columns" />
                    <span className="h-px" />
                    <Arrow dir="up" />
                    <Arrow dir="down" />
                    <div className="w-3.5 flex-1 bg-[#fafbfc]">
                      <div className="h-3 w-3.5 border border-[#a6b3c2] bg-[#e2eaf2]" />
                    </div>
                    <Arrow dir="up" />
                    <Arrow dir="down" />
                  </div>
                </div>
                <div className="flex h-5 items-center gap-0.5 pr-5 pl-[399px]">
                  <Arrow dir="left" />
                  <Arrow dir="right" />
                  <div className="ml-0.5 h-[15px] flex-1 bg-[#fafbfc]">
                    <div className="flex h-[15px] w-5 items-center justify-center border border-[#93a8bc] bg-[#d9e5ef]">
                      <svg width="9" height="6" viewBox="0 0 9 6" aria-hidden="true">
                        <path d="M0 1h9M0 5h9" stroke="#8499ad" strokeDasharray="2 1.500" />
                      </svg>
                    </div>
                  </div>
                  <Arrow dir="left" />
                  <Arrow dir="right" />
                </div>
              </div>

              <div className="mt-3 flex pl-px">
                <div className="flex gap-px">
                  {["detail", "selectAll", "deselect"].map((n) => <SmallButton key={n} name={n} />)}
                </div>
                <div className="ml-[9px] flex gap-px">
                  {["addRow", "removeRow"].map((n) => <SmallButton key={n} name={n} />)}
                </div>
                <div className="mr-[9px] ml-[9px] flex">
                  <SmallButton name="position" />
                </div>
                <WideButton name="detail" label="批次拆分" w="w-[143px]" />
                <div className="ml-[9px] flex gap-px">
                  <WideButton name="filter" label="主项目" w="w-[167px]" />
                  <WideButton name="unfilter" label="所有项目" w="w-[167px]" />
                </div>
              </div>
              <NetMonitor />
            </div>
          </section>
        </main>

        <footer className="relative flex h-[29px] items-center justify-between border-b-2 border-[#c0c2c4] bg-linear-to-b from-white to-[#fbfbfb] pt-0.5 pr-5 pl-[661px]">
          <svg width="40" height="20" viewBox="0 0 40 20" role="img" aria-label="SAP">
            <defs>
              <linearGradient id="sap" x1="0" y1="0" x2="0" y2="1">
                <stop offset="0" stopColor="#10b4ea" />
                <stop offset="1" stopColor="#1f56b4" />
              </linearGradient>
            </defs>
            <path d="M0 0h40L20 20H0z" fill="url(#sap)" />
            <text x="1" y="15" fill="#fff" stroke="#fff" strokeWidth=".6" fontSize="14" fontWeight="bold" fontFamily="Liberation Sans, sans-serif">SAP</text>
          </svg>
          <div className="flex items-center">
            <svg width="9" height="12" viewBox="0 0 9 12" aria-hidden="true">
              <path d="M1 1v10l6-5z" fill="#dce9f7" stroke="#3a6ea8" />
            </svg>
            <span className="ml-3 pt-0.5 text-[11px]">330</span>
            <svg width="10" height="6" viewBox="0 0 10 6" className="ml-1" aria-hidden="true">
              <path d="M0 0h10L5 5z" fill="#24365f" />
            </svg>
            <span className="mx-[7px] h-4 w-px bg-[#d5d8db]" />
            <span className="pt-0.5 text-[11px]">SAPDEV</span>
            <span className="mx-[5px] h-4 w-px bg-[#d5d8db]" />
            <span className="pt-0.5 text-[11px]">INS</span>
            <span className="ml-1.5 h-4 w-px bg-[#d5d8db]" />
            <span className="mr-3 ml-[25px] h-4 w-px bg-[#d5d8db]" />
            <Icon name="swap" />
            <span className="mr-2.5 ml-2 h-4 w-px bg-[#d5d8db]" />
            <Icon name="lock" />
          </div>
          <span className="pointer-events-none absolute top-2 right-2 font-['Open_Sans',sans-serif] text-[15px] leading-5 whitespace-nowrap text-black/15">
            https://blog.csdn.net/weixin_41933045
          </span>
        </footer>
      </div>

      <div className="flex h-2 overflow-hidden bg-[#362d1a] pl-12 text-white">
        <span className="w-[344px] bg-[#f5f3f1]" />
        <span className="ml-[336px] w-[120px] bg-[#5a4e2c]" />
        <time className="mr-[69px] ml-auto pt-1 leading-3">11:37</time>
        <span className="mr-1 w-px bg-[#8b8677]" />
      </div>
    </div>
  );
}
